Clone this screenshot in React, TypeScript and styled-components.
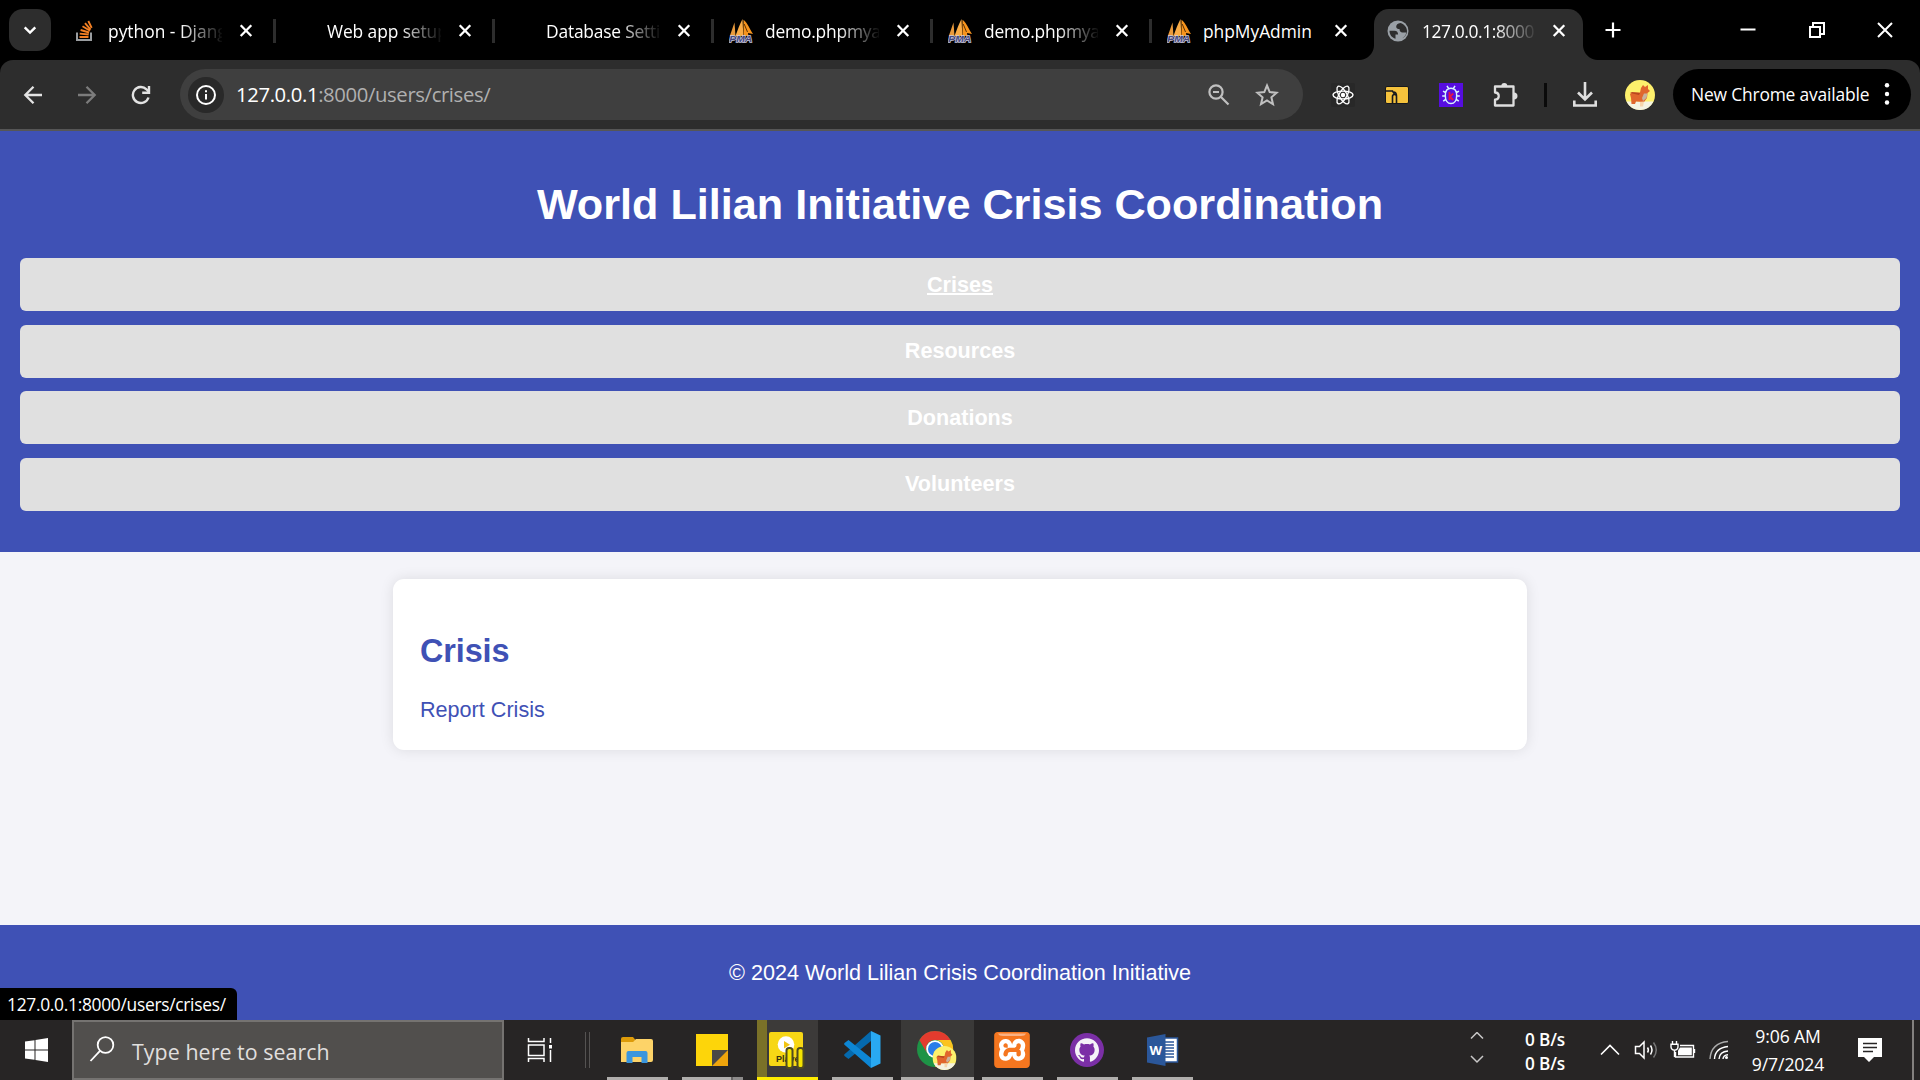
import React from "react";
import styled, { createGlobalStyle, css } from "styled-components";
import { SiXampp, SiGithub } from "react-icons/si";

const UI_FONT = '"Segoe UI", "Open Sans", "Noto Sans", sans-serif';
const PAGE_FONT = 'Arial, "Liberation Sans", sans-serif';
const INDIGO = "#3f51b5";

const GlobalStyle = createGlobalStyle`
  * { box-sizing: border-box; }
  html, body { margin: 0; padding: 0; background: #000; overflow: hidden; }
`;

const Screen = styled.div`
  width: 1920px;
  height: 1080px;
  display: flex;
  flex-direction: column;
  background: #000;
  overflow: hidden;
  font-family: ${UI_FONT};
`;

/* ---------- tab strip ---------- */
const TabStrip = styled.div`
  height: 60px;
  flex: none;
  display: flex;
  align-items: flex-end;
  padding-left: 9px;
  background: #000;
`;
const TabSearch = styled.button`
  width: 42px;
  height: 42px;
  margin: 0 4px 9px 0;
  padding: 0;
  border: 0;
  border-radius: 14px;
  background: #2d2d2d;
  display: grid;
  place-items: center;
`;
const Tab = styled.div<{ $active?: boolean; $divider?: boolean }>`
  position: relative;
  width: 219px;
  height: 51px;
  flex: none;
  display: flex;
  align-items: center;
  padding: 0 17px 8px;
  color: #fff;
  ${(p) =>
    p.$active &&
    css`
      width: 209px;
      margin-left: 5px;
      padding-left: 12px;
      background: #2d2d2d;
      border-radius: 15px 15px 0 0;
      &::before,
      &::after {
        content: "";
        position: absolute;
        bottom: 0;
        width: 15px;
        height: 15px;
      }
      &::before {
        left: -15px;
        background: radial-gradient(circle at 0 0, #000 14.5px, #2d2d2d 15.5px);
      }
      &::after {
        right: -15px;
        background: radial-gradient(circle at 100% 0, #000 14.5px, #2d2d2d 15.5px);
      }
    `}
  ${(p) =>
    p.$divider &&
    css`
      &::after {
        content: "";
        position: absolute;
        right: -2px;
        top: 10px;
        width: 3px;
        height: 24px;
        background: #2d2d2d;
      }
    `}
`;
const Favicon = styled.span`
  width: 24px;
  height: 24px;
  flex: none;
  margin-right: 12px;
  svg { display: block; }
`;
const TabTitle = styled.span<{ $ls: number; $fade: boolean }>`
  width: 114px;
  flex: none;
  margin-top: 1px;
  overflow: hidden;
  white-space: nowrap;
  font-size: 17.4px;
  line-height: 26px;
  letter-spacing: ${(p) => p.$ls}px;
  ${(p) =>
    p.$fade &&
    css`
      mask-image: linear-gradient(90deg, #000 72px, transparent 116px);
    `}
`;
const TabClose = styled.span<{ $active: boolean }>`
  width: 16px;
  height: 16px;
  margin-left: ${(p) => (p.$active ? 14.5 : 16)}px;
  svg { display: block; }
`;
const NewTab = styled.span`
  width: 42px;
  height: 42px;
  margin: 0 0 9px 9px;
  display: grid;
  place-items: center;
`;
const WindowButtons = styled.div`
  margin: 0 0.5px 0 auto;
  height: 60px;
  display: flex;
`;
const WindowButton = styled.span`
  width: 68.5px;
  height: 59px;
  display: grid;
  place-items: center;
`;

/* ---------- toolbar ---------- */
const Toolbar = styled.div`
  height: 71px;
  flex: none;
  display: flex;
  align-items: center;
  padding: 0 9px 0 12px;
  background: #2d2d2d;
  border-radius: 13px 13px 0 0;
  border-bottom: 2px solid #565656;
`;
const ToolIcon = styled.span<{ $w?: number }>`
  width: ${(p) => p.$w ?? 42}px;
  height: 42px;
  flex: none;
  display: grid;
  place-items: center;
`;
const AddressBar = styled.div`
  width: 1123px;
  height: 51px;
  flex: none;
  margin-left: 18px;
  padding: 0 12px 0 8px;
  display: flex;
  align-items: center;
  border-radius: 26px;
  background: #3f3f3f;
`;
const SiteInfo = styled.span`
  width: 36px;
  height: 36px;
  border-radius: 50%;
  background: #292929;
  display: grid;
  place-items: center;
`;
const Url = styled.span`
  flex: 1;
  margin: -2px 0 0 12px;
  font-size: 20.3px;
  line-height: 28px;
  letter-spacing: -0.38px;
  color: #b0b0b0;
  b { color: #fff; font-weight: 400; }
`;
const ToolDivider = styled.span`
  width: 3px;
  height: 24px;
  margin: 0 17px 0 24px;
  background: #0a0a0a;
`;
const UpdatePill = styled.div`
  width: 238px;
  height: 51px;
  flex: none;
  margin-left: auto;
  padding: 0 21px 2px 18px;
  display: flex;
  align-items: center;
  justify-content: space-between;
  border-radius: 26px;
  background: #000;
  color: #fff;
  font-size: 17.4px;
  letter-spacing: -0.17px;
  white-space: nowrap;
`;

/* ---------- web page ---------- */
const Page = styled.div`
  position: relative;
  height: 889px;
  flex: none;
  display: flex;
  flex-direction: column;
  background: #f4f4f9;
  font-family: ${PAGE_FONT};
  font-size: 21.6px;
`;
const PageHeader = styled.header`
  height: 421px;
  padding: 49px 20px 0;
  background: ${INDIGO};
  color: #fff;
  text-align: center;
`;
const PageTitle = styled.h1`
  margin: 0 0 29px;
  font-size: 43.2px;
  line-height: 49px;
`;
const Nav = styled.nav`
  display: flex;
  flex-direction: column;
  gap: 13.5px;
`;
const NavLink = styled.a<{ $hover?: boolean }>`
  height: 53px;
  line-height: 53px;
  border-radius: 6px;
  background: #e0e0e0;
  color: #fff;
  font-weight: 700;
  text-decoration: ${(p) => (p.$hover ? "underline" : "none")};
  text-decoration-thickness: 2px;
  &:nth-child(even) { line-height: 52px; }
`;
const Card = styled.main`
  width: 1134px;
  height: 171px;
  margin: 27px auto 0;
  padding: 54px 27px 0;
  border-radius: 11px;
  background: #fff;
  box-shadow: 0 0 14px rgba(0, 0, 0, 0.1);
  color: ${INDIGO};
`;
const CardTitle = styled.h2`
  margin: 0 0 27px;
  font-size: 32.4px;
  line-height: 37px;
  letter-spacing: -0.1px;
`;
const CardLink = styled.a`
  display: block;
  line-height: 25px;
`;
const PageFooter = styled.footer`
  height: 95px;
  margin-top: auto;
  background: ${INDIGO};
  color: #fff;
  text-align: center;
  line-height: 95px;
`;
const StatusBubble = styled.div`
  position: absolute;
  left: 0;
  bottom: 0;
  width: 237px;
  height: 32px;
  padding-left: 7px;
  border-radius: 0 6px 0 0;
  background: #000;
  color: #fff;
  font-family: ${UI_FONT};
  font-size: 17.4px;
  line-height: 33px;
  letter-spacing: -0.3px;
`;

/* ---------- taskbar ---------- */
const Taskbar = styled.div`
  height: 60px;
  flex: none;
  display: flex;
  background: #272525;
  color: #fff;
`;
const StartButton = styled.span`
  width: 72px;
  padding-right: 1px;
  display: grid;
  place-items: center;
`;
const SearchBox = styled.div`
  width: 432px;
  display: flex;
  align-items: center;
  padding: 2px 0 0 15px;
  border: 2px solid #757371;
  background: #514f4d;
  color: #e0dfde;
  font-size: 21.4px;
  letter-spacing: 0.05px;
  svg { margin: -5px 17px 0 0; }
`;
const TaskView = styled.span`
  width: 71px;
  display: grid;
  place-items: center;
`;
const TaskDivider = styled.span`
  width: 5px;
  height: 36px;
  margin: 12px 17px 0 10px;
  border: solid #555352;
  border-width: 0 1px;
`;
const Apps = styled.div`
  display: flex;
  gap: 14px;
`;
const AppButton = styled.span<{ $kind?: "focus" | "player" | "stack" }>`
  width: 61px;
  height: 60px;
  flex: none;
  display: grid;
  place-items: center;
  padding: 2px 1px 0 0;
  border-bottom: 3px solid #b0aeac;
  ${(p) =>
    p.$kind === "focus" &&
    css`
      width: 73px;
      margin: 0 -6px;
      background: #3a3938;
    `}
  ${(p) =>
    p.$kind === "player" &&
    css`
      background: linear-gradient(90deg, #7a7128 10px, #3c3a39 10px);
      border-color: #ffec00;
    `}
  ${(p) =>
    p.$kind === "stack" &&
    css`
      border-image: linear-gradient(90deg, #b0aeac 47px, #676564 47px, #676564 49px, #8d8b8a 49px) 3;
      border-width: 0 0 3px;
      border-style: solid;
    `}
`;
const Tray = styled.div`
  margin-left: auto;
  display: flex;
  align-items: center;
`;
const TrayItem = styled.span<{ $w: number }>`
  width: ${(p) => p.$w}px;
  display: grid;
  place-items: center;
`;
const NetSpeed = styled.div`
  width: 40px;
  margin: 3px 30px 0 41px;
  font-size: 17.2px;
  font-weight: 600;
  line-height: 23.5px;
  letter-spacing: -0.15px;
  white-space: nowrap;
`;
const Clock = styled.div`
  width: 76px;
  margin: 0 0 0 11px;
  font-size: 17.6px;
  line-height: 28px;
  letter-spacing: -0.1px;
  text-align: center;
  white-space: nowrap;
`;
const ShowDesktop = styled.span`
  width: 8px;
  height: 60px;
  border-left: 2px solid #83817f;
`;

/* ---------- drawings ---------- */
const StackOverflowIcon = () => (
  <svg width="24" height="24" viewBox="0 0 24 24" fill="none">
    <path d="M5 13.500v7.500h14v-7.500" stroke="#9a9da0" strokeWidth="2" />
    <path d="M7.500 18h9M7.700 14.600l9 .9M8.600 11l8.500 2.500M10.500 7.300 18 11.800M13 4.200l5.600 6.500M16.300 2l3.400 6.800" stroke="#f48024" strokeWidth="1.900" />
  </svg>
);
const PmaIcon = () => (
  <svg width="24" height="24" viewBox="0 0 24 24">
    <path d="M.8 17 5.500 3.500 6.500 17z" fill="#e99a3c" />
    <path d="M6.500 17C8.500 11 10.500 6 13.500 0l.8 17z" fill="#f9ac47" />
    <path d="M14.500.8c4 3 6 9 9.500 14.200l-5-1 .5 3h-5z" fill="#f7941d" />
    <path d="M15.200 5 18.500 13" stroke="#5b3306" strokeWidth="1" />
    <text x=".3" y="23.300" fontFamily="Liberation Sans, sans-serif" fontSize="9.500" fontWeight="700" fontStyle="italic" fill="#45477d" stroke="#c9cadf" strokeWidth="1.300" paintOrder="stroke" textLength="23" lengthAdjust="spacingAndGlyphs">PMA</text>
  </svg>
);
const GlobeIcon = () => (
  <svg width="24" height="24" viewBox="0 0 24 24">
    <circle cx="12" cy="12" r="10.500" fill="#9aa0a6" />
    <path d="M3.500 11.800h5c2.400.1 3.600 1.400 3.600 3.600H9.500v4.300c-3.600-.9-6-3.800-6-7.900zM14.500 3.900c-3 .2-4.300 1.700-4.300 3.900 0 1.700 1.400 2.300 3.300 2.300 0 2.200 1.200 3.400 3 3.400h3.800c-.5 2.700-2 4.700-4.300 5.900 2-.7 5-3.500 5-7.400 0-3.600-2.500-6.800-6.500-8.100z" fill="#2d2d2d" />
  </svg>
);
const CloseIcon = () => (
  <svg width="16" height="16" viewBox="0 0 16 16">
    <path d="M2.700 2.200 13.300 13M13.300 2.200 2.700 13" stroke="#fff" strokeWidth="2.300" />
  </svg>
);
const Corgi = ({ size }: { size: number }) => (
  <svg width={size} height={size} viewBox="0 0 30 30">
    <circle cx="15" cy="15" r="15" fill="#fdf06c" />
    <path d="M1.500 21.500h27A15 15 0 0 1 1.500 21.500z" fill="#f4f3e2" />
    <path d="M5 14c1.500-2 7-1.500 10-1.500L16 8l2-3 2 2 3-2v4l2 2-2.500 2L22 18l-3 4-8-.5-1 2.500H6.500L6 18z" fill="#e0662d" />
    <path d="M19 13.500l3.500 0-1 4.500-3.500 3-1-3z" fill="#c8b29c" />
    <path d="M15 22l4-.5-1 5h-3z" fill="#f6d6ac" />
    <path d="M5 13l2-1 8 1-1 2z" fill="#b9461f" />
  </svg>
);
const ReactIcon = () => (
  <svg width="24" height="24" viewBox="0 0 24 24" fill="none" stroke="#fff" strokeWidth="1.350">
    <rect width="24" height="24" rx="2" fill="#282828" stroke="none" />
    <circle cx="12" cy="12" r="2.200" fill="#fff" stroke="none" />
    {[0, 60, 120].map((a) => (
      <ellipse key={a} cx="12" cy="12" rx="10" ry="3.900" transform={`rotate(${a} 12 12)`} />
    ))}
  </svg>
);
const BugIcon = () => (
  <svg width="24" height="24" viewBox="0 0 24 24" fill="none">
    <rect width="24" height="24" fill="#560de0" />
    <path d="M12 5.200c3.500 0 5.700 2.500 5.700 7.200S15.500 20.500 12 20.500s-5.700-3.400-5.700-8.100S8.500 5.200 12 5.200zM9.500 5.400 8 2.800M14.500 5.400 16 2.800M6.500 9.500 4 8.200M6.200 13H3.200M6.700 16.500l-2.500 1.600M17.500 9.500 20 8.200M17.800 13h3M17.300 16.500l2.500 1.600" stroke="#d7f3ff" strokeWidth="1.500" />
    <path d="M10.500 9v8M14.200 10.500l-3.200 3.200 3.200 3.300" stroke="#e51343" strokeWidth="1.800" />
  </svg>
);
const ChromeIcon = () => (
  <svg width="40" height="40" viewBox="0 0 40 40">
    <circle cx="18" cy="19" r="18" fill="#1e9346" />
    <path d="M2.400 10A18 18 0 0 1 33.600 10H18a9 9 0 0 0-7.800 13.500z" fill="#e33b2e" />
    <path d="M33.600 10a18 18 0 0 1-15.600 27l7.800-13.500A9 9 0 0 0 18 10z" fill="#fcc31e" />
    <circle cx="18" cy="19" r="8.800" fill="#fff" />
    <circle cx="18" cy="19" r="7" fill="#2a7de9" />
    <g transform="translate(15.500 16)"><Corgi size={24} /></g>
  </svg>
);

const tabs = [
  { title: "python - Djang", icon: <StackOverflowIcon />, fade: true, ls: 0 },
  { title: "Web app setup", icon: null, fade: true, ls: -0.1 },
  { title: "Database Setti", icon: null, fade: true, ls: -0.2 },
  { title: "demo.phpmya", icon: <PmaIcon />, fade: true, ls: -0.2 },
  { title: "demo.phpmya", icon: <PmaIcon />, fade: true, ls: -0.2 },
  { title: "phpMyAdmin", icon: <PmaIcon />, fade: false, ls: -0.03 },
  { title: "127.0.0.1:8000", icon: <GlobeIcon />, fade: true, ls: -0.4 },
];
const navItems = ["Crises", "Resources", "Donations", "Volunteers"];

export default function App() {
  return (
    <Screen>
      <GlobalStyle />
      <TabStrip>
        <TabSearch>
          <svg width="16" height="16" viewBox="0 0 16 16" fill="none"><path d="m2.700 5.300 5.300 5.200 5.300-5.200" stroke="#fff" strokeWidth="2.400" /></svg>
        </TabSearch>
        {tabs.map((t, i) => (
          <Tab key={i} $active={i === 6} $divider={i < 5}>
            <Favicon>{t.icon}</Favicon>
            <TabTitle $fade={t.fade} $ls={t.ls}>{t.title}</TabTitle>
            <TabClose $active={i === 6}><CloseIcon /></TabClose>
          </Tab>
        ))}
        <NewTab>
          <svg width="16" height="16" viewBox="0 0 16 16"><path d="M8 .5v15M.5 8h15" stroke="#fff" strokeWidth="2.200" /></svg>
        </NewTab>
        <WindowButtons>
          <WindowButton><svg width="16" height="16" viewBox="0 0 16 16"><path d="M.5 7.500h15" stroke="#fff" strokeWidth="2" /></svg></WindowButton>
          <WindowButton><svg width="16" height="16" viewBox="0 0 16 16" fill="none" stroke="#fff" strokeWidth="2"><path d="M1 5h10v10H1zM4 5V1h11v11h-4" /></svg></WindowButton>
          <WindowButton><svg width="16" height="16" viewBox="0 0 16 16"><path d="m1 1 14 14M15 1 1 15" stroke="#fff" strokeWidth="2" /></svg></WindowButton>
        </WindowButtons>
      </TabStrip>

      <Toolbar>
        <ToolIcon>
          <svg width="20" height="20" viewBox="0 0 20 20" fill="none" stroke="#e3e3e3" strokeWidth="2.300"><path d="M19 10H3M10.500 1.800 2.300 10l8.200 8.200" /></svg>
        </ToolIcon>
        <ToolIcon $w={66}>
          <svg width="20" height="20" viewBox="0 0 20 20" fill="none" stroke="#7c7c7c" strokeWidth="2.300"><path d="M1 10h16M9.500 1.800l8.200 8.200-8.200 8.200" /></svg>
        </ToolIcon>
        <ToolIcon>
          <svg width="20" height="20" viewBox="0 0 20 20" fill="none" stroke="#e3e3e3" strokeWidth="2.400"><path d="M17.500 12.500A8 8 0 1 1 15.500 4.300L17.500 6.500" /><path d="M18 1v6.800h-6.800" /></svg>
        </ToolIcon>
        <AddressBar>
          <SiteInfo>
            <svg width="20" height="20" viewBox="0 0 20 20" fill="none" stroke="#fff" strokeWidth="2"><circle cx="10" cy="10" r="9" /><path d="M10 9v5.500M10 5.300v2" /></svg>
          </SiteInfo>
          <Url><b>127.0.0.1</b>:8000/users/crises/</Url>
          <ToolIcon $w={48}>
            <svg width="22" height="22" viewBox="0 0 22 22" fill="none" stroke="#c0c0c0" strokeWidth="2.200"><circle cx="8" cy="8" r="6.600" /><path d="M5 8h6M13 13l7.500 7.500" /></svg>
          </ToolIcon>
          <ToolIcon $w={48}>
            <svg width="24" height="24" viewBox="0 0 24 24" fill="none" stroke="#c0c0c0" strokeWidth="2"><path d="m12 2.500 2.700 6.600 7 .6-5.300 4.600 1.600 6.900L12 17.500l-6 3.700 1.600-6.900-5.300-4.600 7-.6z" /></svg>
          </ToolIcon>
        </AddressBar>
        <ToolIcon $w={79}><ReactIcon /></ToolIcon>
        <ToolIcon $w={29}>
          <svg width="24" height="18" viewBox="0 0 24 18"><rect x=".5" y=".5" width="23" height="17" rx="1.500" fill="#f5c23c" stroke="#17191d" /><path d="M1 5h6.500l2 3M7.500 17V10.500a2 2 0 0 1 4 0V17M9 6q2.500.5 2.500 4" fill="none" stroke="#17191d" strokeWidth="1.600" /></svg>
        </ToolIcon>
        <ToolIcon $w={79}><BugIcon /></ToolIcon>
        <ToolIcon $w={30}>
          <svg width="26" height="26" viewBox="0 0 26 26" fill="none"><path d="M3 4.500h18.500v19H3v-5.800c5-.2 5-7 0-7.200z" stroke="#dedede" strokeWidth="2.300" strokeLinejoin="round" /><path d="M9.300 4a3 3 0 0 1 6 0zM22 10.500a3.500 3.500 0 0 1 0 7z" fill="#dedede" /></svg>
        </ToolIcon>
        <ToolDivider />
        <ToolIcon>
          <svg width="26" height="26" viewBox="0 0 26 26" fill="none" stroke="#dedede" strokeWidth="2.600"><path d="M13 0v17M6 10.500l7 7 7-7M2.300 18.500v5h21.400v-5" /></svg>
        </ToolIcon>
        <ToolIcon $w={67}><Corgi size={30} /></ToolIcon>
        <UpdatePill>
          New Chrome available
          <svg width="6" height="22" viewBox="0 0 6 22" fill="#fff"><circle cx="3" cy="2.300" r="2.200" /><circle cx="3" cy="11" r="2.200" /><circle cx="3" cy="19.500" r="2.200" /></svg>
        </UpdatePill>
      </Toolbar>

      <Page>
        <PageHeader>
          <PageTitle>World Lilian Initiative Crisis Coordination</PageTitle>
          <Nav>
            {navItems.map((n, i) => (
              <NavLink key={n} $hover={i === 0}>{n}</NavLink>
            ))}
          </Nav>
        </PageHeader>
        <Card>
          <CardTitle>Crisis</CardTitle>
          <CardLink>Report Crisis</CardLink>
        </Card>
        <PageFooter>© 2024 World Lilian Crisis Coordination Initiative</PageFooter>
        <StatusBubble>127.0.0.1:8000/users/crises/</StatusBubble>
      </Page>

      <Taskbar>
        <StartButton>
          <svg width="24" height="24" viewBox="0 0 24 24" fill="#fff"><path d="M1 3.500 10.500 2.200v9.300H1zM11.500 2 24 0v11.500H11.500zM1 12.500h9.500v9.300L1 20.500zM11.500 12.500H24V24l-12.500-2z" /></svg>
        </StartButton>
        <SearchBox>
          <svg width="26" height="26" viewBox="0 0 26 26" fill="none" stroke="#fff" strokeWidth="1.800"><circle cx="16.500" cy="9" r="7.800" /><path d="M11 14.800 1.500 25" /></svg>
          Type here to search
        </SearchBox>
        <TaskView>
          <svg width="26" height="26" viewBox="0 0 26 26" fill="none" stroke="#fff" strokeWidth="1.500"><path d="M1.500 1v3.500h15.500V1M1.500 8h15.500v10.500H1.500zM1.500 25v-3.500h15.500V25M23.500 1v5M23.500 13v12" /><path d="M22 8h3v3.500h-3z" fill="#fff" stroke="none" /></svg>
        </TaskView>
        <TaskDivider />
        <Apps>
          <AppButton>
            <svg width="34" height="28" viewBox="0 0 34 28"><path d="M1 3a2 2 0 0 1 2-2h10l2.500 3-2.500 3H1z" fill="#dd9b09" /><path d="M1 6h12l3-3h15a2 2 0 0 1 2 2v19a2 2 0 0 1-2 2H1z" fill="#fdd368" /><path d="M6.500 27V17a2 2 0 0 1 2-2h17a2 2 0 0 1 2 2v10h-6v-6h-9v6z" fill="#3a96de" /></svg>
          </AppButton>
          <AppButton $kind="stack">
            <svg width="32" height="32" viewBox="0 0 32 32"><path d="M0 0h32v32H0z" fill="#fdd50a" /><path d="M16 16h16v16H16z" fill="#4a4846" /><path d="M32 16v16H16z" fill="#efa50c" /></svg>
          </AppButton>
          <AppButton $kind="player">
            <svg width="38" height="38" viewBox="0 0 38 38"><rect x="1" y="1" width="34" height="34" rx="2" fill="#f7d715" /><circle cx="18" cy="13.500" r="8.300" fill="#fff" /><path d="M16 10v7.500l6-3.800z" fill="#f2c511" /><text x="8" y="31" fontFamily="Liberation Sans, sans-serif" fontWeight="700" fontSize="9" fill="#33300e">Player</text><g fill="#f5e400" stroke="#4f4b20" strokeWidth="2"><rect x="18.500" y="17" width="6" height="20" rx="2.500" /><rect x="29.500" y="17" width="6" height="20" rx="2.500" /></g></svg>
          </AppButton>
          <AppButton>
            <svg width="37" height="37" viewBox="0 0 37 37"><path d="M27 0 36.500 4.500v28L27 37z" fill="#29a9f2" /><path d="M27 0v10L4.500 28 .8 25.200a1.500 1.500 0 0 1 0-2.300z" fill="#0569ad" /><path d="M27 37V27L4.500 9 .8 11.800a1.500 1.500 0 0 0 0 2.300z" fill="#0d86d4" /></svg>
          </AppButton>
          <AppButton $kind="focus"><ChromeIcon /></AppButton>
          <AppButton>
            <svg width="36" height="36" viewBox="0 0 36 36"><rect x="3" y="3" width="30" height="30" fill="#fff" /><SiXampp size={36} color="#f5761f" /><path d="M4 1.500h28q-1 2.500-5 2.500H9q-4 0-5-2.500z" fill="#f9b184" /></svg>
          </AppButton>
          <AppButton>
            <svg width="34" height="34" viewBox="0 0 34 34"><circle cx="17" cy="17" r="17" fill="#7b2fa6" /><g transform="translate(5 5)"><SiGithub size={24} color="#f5f2f8" /></g></svg>
          </AppButton>
          <AppButton>
            <svg width="33" height="32" viewBox="0 0 33 32"><path d="M17 4h14.500v24H17z" fill="#fff" stroke="#2b579a" strokeWidth="1.500" /><path d="M19 8h9M19 11h9M19 14h9M19 17h9M19 20h9M19 23h9" stroke="#2b579a" strokeWidth="1.500" /><path d="M1 3.500 19.500 0v32L1 28.500z" fill="#2b579a" /><text x="3.500" y="21" fontFamily="Open Sans, sans-serif" fontWeight="700" fontSize="13" fill="#fff">W</text></svg>
          </AppButton>
        </Apps>
        <Tray>
          <TrayItem $w={14}>
            <svg width="14" height="36" viewBox="0 0 14 36" fill="none" stroke="#c9c8c8" strokeWidth="1.500"><path d="m1 6.500 6-6 6 6M1 24l6 6 6-6" /></svg>
          </TrayItem>
          <NetSpeed>0 B/s<br />0 B/s</NetSpeed>
          <TrayItem $w={30}>
            <svg width="20" height="12" viewBox="0 0 20 12" fill="none" stroke="#fff" strokeWidth="1.600"><path d="m1 10.500 9-9 9 9" /></svg>
          </TrayItem>
          <TrayItem $w={42}>
            <svg width="24" height="20" viewBox="0 0 24 20" fill="none" stroke="#fff" strokeWidth="1.500"><path d="M1.500 6.500h4L10 2v16l-4.500-4.500h-4z" /><path d="M13.500 7.500q1.800 2.500 0 5M16.500 5.500q3 4.500 0 9" /><path d="M19.500 2.500q5.500 7.500 0 15" stroke="#777" /></svg>
          </TrayItem>
          <TrayItem $w={32}>
            <svg width="26" height="18" viewBox="0 0 26 18" fill="none" stroke="#fff" strokeWidth="1.400"><path d="M10 4.500h13.500V16H5.500v-5M24.500 8v4" /><path d="M10 6.500h11.800v7.800H8V9.500z" fill="#fff" stroke="none" /><path d="M2.500 0v3M6.500 0v3M1 3.300h7v2.500q0 3-3.500 3.500Q1 8.800 1 5.800zM4.500 9.500V16" /></svg>
          </TrayItem>
          <TrayItem $w={40}>
            <svg width="20" height="20" viewBox="0 0 20 20" fill="none" stroke="#fff" strokeWidth="1.400"><path d="M1 19Q2 3 19 1.500" stroke="#aaa" /><path d="M5.500 19Q6 8 19 6.500M10 19q.5-7.500 9-8M14 19q.3-4 5-4.300" /><circle cx="17.500" cy="17.500" r="1.500" fill="#fff" stroke="none" /></svg>
          </TrayItem>
          <Clock>9:06 AM<br />9/7/2024</Clock>
          <TrayItem $w={86}>
            <svg width="26" height="24" viewBox="-2 0 26 24"><path d="M0 0h24v19h-8l-5 5-5-5H0z" fill="#fff" /><path d="M5 5.500h14M5 9.500h14M5 13.500h10" stroke="#272525" strokeWidth="1.300" /></svg>
          </TrayItem>
          <ShowDesktop />
        </Tray>
      </Taskbar>
    </Screen>
  );
}
